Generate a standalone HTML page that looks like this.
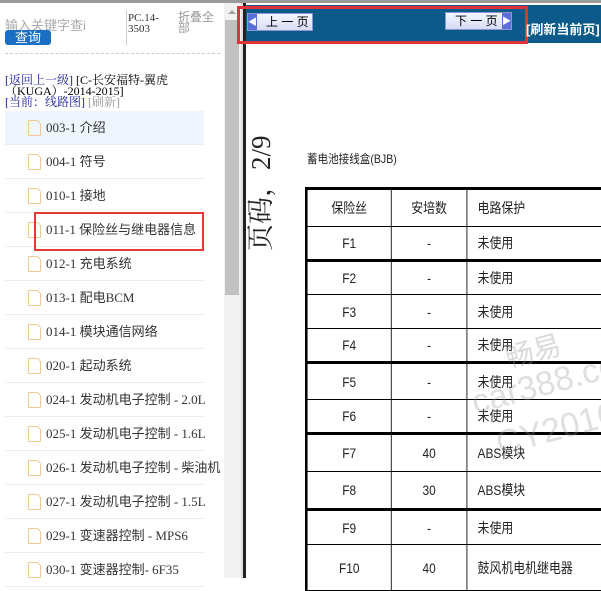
<!DOCTYPE html>
<html><head><meta charset="utf-8"><style>
*{margin:0;padding:0;box-sizing:border-box}
body{width:601px;height:578px;overflow:hidden;background:#fff;position:relative;font-family:"Liberation Serif","Noto Serif CJK SC",serif;}
.a{position:absolute}
.sans{font-family:"Liberation Sans","Noto Sans CJK SC",sans-serif}
.item{position:absolute;left:5px;width:199px;height:34px;border-bottom:1px solid #eee;font-size:13px;color:#333;line-height:34px;padding-left:41px;white-space:nowrap;font-family:"Liberation Serif","Noto Sans CJK SC",serif}
.item i{position:absolute;left:23px;top:9px;width:13px;height:16px;border:1.5px solid #f0c890;border-radius:1px 5px 1px 1px}
table{position:absolute;left:305px;top:187px;border-collapse:collapse;font-family:"Liberation Sans","Noto Sans CJK SC",sans-serif;font-size:14px;color:#222;transform:scaleX(.85);transform-origin:0 0}
td{border:1px solid #000;height:34px}
td.c{text-align:center}
td.l{padding-left:12px}
.arr{position:absolute;width:9px;height:16px;background:#5b6fd8;color:#fff;font-size:9px;line-height:16px;text-align:center}
</style></head><body>
<div class="a" style="left:0;top:0;width:601px;height:3px;background:#9a9a9a"></div>
<div class="a sans" style="left:5px;top:15px;font-size:13px;color:#aaa">输入关键字查i</div>
<div class="a sans" style="left:5px;top:30px;width:46px;height:15px;background:#1a6fc4;border-radius:3px;color:#fff;font-size:13px;line-height:15px;text-align:center">查询</div>
<div class="a" style="left:126px;top:10px;width:1px;height:35px;background:#ccc"></div>
<div class="a" style="left:128px;top:13px;font-size:11px;line-height:11px;color:#333">PC.14-<br>3503</div>
<div class="a sans" style="left:178px;top:12px;font-size:12px;line-height:11px;color:#999">折叠全<br>部</div>
<div class="a" style="left:5px;top:53px;width:215px;border-top:1px dashed #ccc"></div>
<div class="a" style="left:5px;top:75px;font-size:12px;line-height:11px;color:#000;width:215px"><span style="color:#1a1aa0">[返回上一级]</span> [C-长安福特-翼虎（KUGA）-2014-2015]<br><span style="color:#1a1aa0">[当前：线路图]</span> <span style="color:#999">[刷新]</span></div>
<div class="a" style="left:5px;top:111px;width:199px;height:34px;background:#eef5fc"></div>
<div class="item" style="top:111px"><i></i>003-1 介绍</div>
<div class="item" style="top:145px"><i></i>004-1 符号</div>
<div class="item" style="top:179px"><i></i>010-1 接地</div>
<div class="item" style="top:213px"><i></i>011-1 保险丝与继电器信息</div>
<div class="item" style="top:247px"><i></i>012-1 充电系统</div>
<div class="item" style="top:281px"><i></i>013-1 配电BCM</div>
<div class="item" style="top:315px"><i></i>014-1 模块通信网络</div>
<div class="item" style="top:349px"><i></i>020-1 起动系统</div>
<div class="item" style="top:383px"><i></i>024-1 发动机电子控制 - 2.0L</div>
<div class="item" style="top:417px"><i></i>025-1 发动机电子控制 - 1.6L</div>
<div class="item" style="top:451px"><i></i>026-1 发动机电子控制 - 柴油机</div>
<div class="item" style="top:485px"><i></i>027-1 发动机电子控制 - 1.5L</div>
<div class="item" style="top:519px"><i></i>029-1 变速器控制 - MPS6</div>
<div class="item" style="top:553px"><i></i>030-1 变速器控制- 6F35</div>
<div class="a" style="left:34px;top:212px;width:170px;height:39px;border:2px solid #e53935"></div>
<div class="a" style="left:224px;top:3px;width:17px;height:575px;background:#f1f1f1"></div>
<div class="a" style="left:225px;top:20px;width:14px;height:275px;background:#c1c1c1"></div>
<div class="a" style="left:228px;top:10px;width:0;height:0;border-left:4px solid transparent;border-right:4px solid transparent;border-bottom:4px solid #a0a0a0"></div>
<div class="a" style="left:241px;top:3px;width:2px;height:575px;background:#ddd"></div>
<div class="a" style="left:243px;top:3px;width:3px;height:575px;background:#222"></div>
<div class="a" style="left:246px;top:5px;width:355px;height:38px;background:#0b5a8a"></div>
<div class="a" style="left:237px;top:6px;width:291px;height:38px;border:3px solid #e0343a"></div>
<div class="a sans" style="left:247px;top:13px;width:66px;height:18px;background:linear-gradient(#f4f6ff,#d6dcf5);border:1px solid #8a96d0;font-size:12px;line-height:16px;padding-left:18px;color:#000">上 一 页</div>
<div class="arr" style="left:248px;top:14px">◀</div>
<div class="a sans" style="left:445px;top:12px;width:67px;height:18px;background:linear-gradient(#f4f6ff,#d6dcf5);border:1px solid #8a96d0;font-size:12px;line-height:16px;padding-left:9px;color:#000">下 一 页</div>
<div class="arr" style="left:502px;top:13px">▶</div>
<div class="a sans" style="left:526px;top:19px;font-size:13px;font-weight:bold;color:#fff;white-space:nowrap">[刷新当前页]</div>
<div class="a" style="left:193px;top:168px;width:136px;height:30px;transform:rotate(-90deg);font-size:27px;line-height:30px;color:#222;white-space:nowrap">页码，2/9</div>
<div class="a sans" style="left:307px;top:150px;font-size:12px;color:#222;transform:scaleX(.88);transform-origin:0 0">蓄电池接线盒(BJB)</div>
<table style="border-left:3px solid #000;border-top:3px solid #000;width:352px">
<tr><td class="c" style="width:100px;height:38px">保险丝</td><td class="c" style="width:89px">安培数</td><td class="l">电路保护</td></tr>
<tr style="border-bottom:3px solid #000"><td class="c">F1</td><td class="c">-</td><td class="l">未使用</td></tr>
<tr><td class="c">F2</td><td class="c">-</td><td class="l">未使用</td></tr>
<tr><td class="c">F3</td><td class="c">-</td><td class="l">未使用</td></tr>
<tr style="border-bottom:3px solid #000"><td class="c">F4</td><td class="c">-</td><td class="l">未使用</td></tr>
<tr><td class="c" style="height:37px">F5</td><td class="c">-</td><td class="l">未使用</td></tr>
<tr style="border-bottom:3px solid #000"><td class="c">F6</td><td class="c">-</td><td class="l">未使用</td></tr>
<tr><td class="c" style="height:38px">F7</td><td class="c">40</td><td class="l">ABS模块</td></tr>
<tr style="border-bottom:3px solid #000"><td class="c" style="height:38px">F8</td><td class="c">30</td><td class="l">ABS模块</td></tr>
<tr><td class="c" style="height:35px">F9</td><td class="c">-</td><td class="l">未使用</td></tr>
<tr><td class="c" style="height:46px">F10</td><td class="c">40</td><td class="l">鼓风机电机继电器</td></tr>
</table>
<div class="a sans" style="left:505px;top:330px;font-size:28px;color:rgba(150,150,150,.35);transform:rotate(-15deg);white-space:nowrap">畅易</div>
<div class="a sans" style="left:470px;top:365px;font-size:34px;color:rgba(150,150,150,.3);transform:rotate(-15deg);white-space:nowrap">car388.co</div>
<div class="a sans" style="left:495px;top:410px;font-size:34px;color:rgba(150,150,150,.3);transform:rotate(-15deg);white-space:nowrap">CY2016</div>
</body></html>
